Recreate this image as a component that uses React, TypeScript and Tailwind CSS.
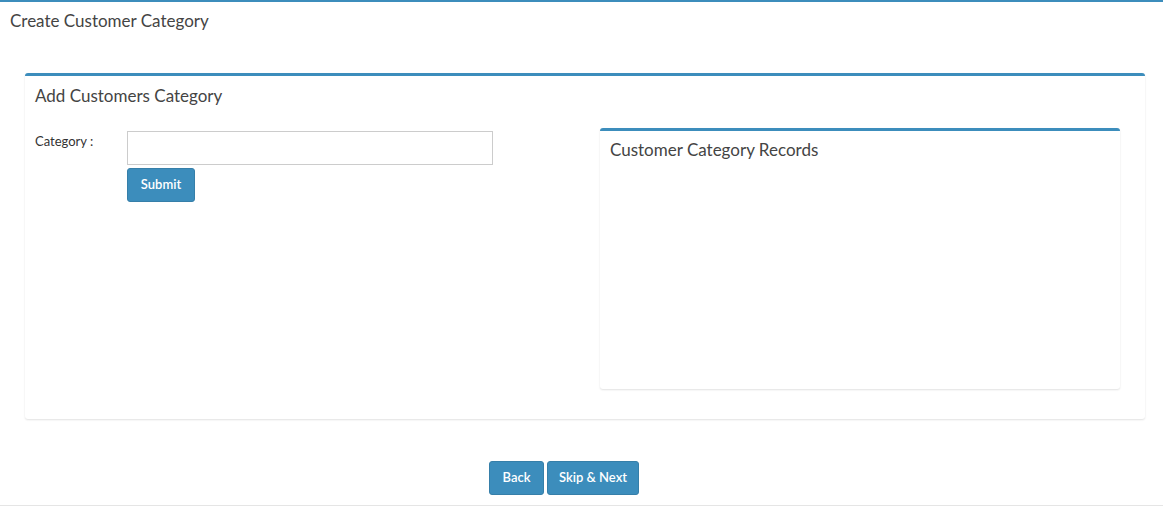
export default function App() {
    return (
        <div className="min-h-[523px] bg-white border-t-2 border-[#3c8dbc] text-[#444] font-['Lato','Noto_Sans',sans-serif]">
            <h1 className="px-[10px] pt-[8px] text-[17px] leading-[22px]">Create Customer Category</h1>

            <div className="mx-[25px] mt-[41px] w-[1120px] rounded-[3px] border-t-[3px] border-[#3c8dbc] bg-white shadow-[0_1px_2px_rgba(0,0,0,0.12)]">
                <div className="px-[10px] pt-[10px] pb-[10px]">
                    <h3 className="text-[17px] leading-[20px]">Add Customers Category</h3>
                </div>
                <div className="flex px-[10px] pt-[15px] pb-[30px]">
                    <div className="w-[555px] flex">
                        <label className="w-[92px] pt-[1px] text-[13px] leading-[18px] text-[#333]">Category :</label>
                        <div className="flex flex-col gap-[3px]">
                            <input type="text" className="w-[366px] h-[34px] border border-[#ccc] px-3 text-sm outline-none" />
                            <button className="w-[68px] h-[34px] rounded-[3px] border border-[#367fa9] bg-[#3c8dbc] text-white text-[13px] font-semibold">Submit</button>
                        </div>
                    </div>
                    <div className="ml-[10px] -mt-[3px] w-[520px] h-[261px] rounded-[3px] border-t-[3px] border-[#3c8dbc] bg-white shadow-[0_1px_2px_rgba(0,0,0,0.12)]">
                        <h3 className="px-[10px] pt-[9px] text-[17px] leading-[20px]">Customer Category Records</h3>
                    </div>
                </div>
            </div>

            <div className="mt-[42px] flex justify-center gap-[3px] pr-[35px]">
                <button className="w-[55px] h-[34px] rounded-[3px] border border-[#367fa9] bg-[#3c8dbc] text-white text-[13px] font-semibold">Back</button>
                <button className="w-[92px] h-[34px] rounded-[3px] border border-[#367fa9] bg-[#3c8dbc] text-white text-[13px] font-semibold">Skip &amp; Next</button>
            </div>
            <div className="mt-[10px] border-t border-[#e5e5e5]" />
        </div>
    );
}
